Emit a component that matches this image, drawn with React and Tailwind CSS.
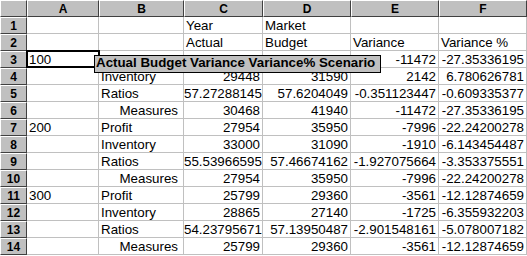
import React from "react";

const widths = ["w-[72px]", "w-[85px]", "w-[79px]", "w-[88px]", "w-[88px]", "w-[88px]"];
const letters = ["A", "B", "C", "D", "E", "F"];

const rows = [
  ["", "", "Year", "Market", "", ""],
  ["", "", "Actual", "Budget", "Variance", "Variance %"],
  ["100", "", "", "", "-11472", "-27.35336195"],
  ["", "Inventory", "29448", "31590", "2142", "6.780626781"],
  ["", "Ratios", "57.27288145", "57.6204049", "-0.351123447", "-0.609335377"],
  ["", "Measures", "30468", "41940", "-11472", "-27.35336195"],
  ["200", "Profit", "27954", "35950", "-7996", "-22.24200278"],
  ["", "Inventory", "33000", "31090", "-1910", "-6.143454487"],
  ["", "Ratios", "55.53966595", "57.46674162", "-1.927075664", "-3.353375551"],
  ["", "Measures", "27954", "35950", "-7996", "-22.24200278"],
  ["300", "Profit", "25799", "29360", "-3561", "-12.12874659"],
  ["", "Inventory", "28865", "27140", "-1725", "-6.355932203"],
  ["", "Ratios", "54.23795671", "57.13950487", "-2.901548161", "-5.078007182"],
  ["", "Measures", "25799", "29360", "-3561", "-12.12874659"],
];

const isNum = (s) => /^-?\d+(\.\d+)?$/.test(s) && s !== "100" && s !== "200" && s !== "300";

function Cell({ value, w }) {
  const right = isNum(value);
  const measures = value === "Measures";
  return (
    <div
      className={`${w} flex-none h-[17px] box-border border-r border-b border-[#c0c0c0] overflow-hidden whitespace-nowrap pt-[1px] leading-[15px] ${
        right ? "text-right pr-[2px]" : measures ? "text-right pr-[5px]" : "text-left pl-[2px]"
      }`}
    >
      {value}
    </div>
  );
}

export default function App() {
  return (
    <div className="relative w-[527px] h-[256px] overflow-hidden bg-white text-black font-['Liberation_Sans',Arial,sans-serif] text-[13.33px]">
      <div className="flex h-[17px]">
        <div className="w-[27px] flex-none h-[17px] box-border bg-[#c0c0c0] border-t border-l border-t-white border-l-white border-r border-b border-r-[#404040] border-b-[#404040]" />
        {letters.map((l, i) => (
          <div
            key={l}
            className={`${widths[i]} flex-none h-[17px] box-border bg-[#c0c0c0] border-t border-l border-t-white border-l-white border-r border-b border-r-[#404040] border-b-[#404040] text-center font-bold text-[12px] leading-[17px]`}
          >
            {l}
          </div>
        ))}
      </div>
      {rows.map((r, ri) => (
        <div key={ri} className="flex h-[17px]">
          <div className="w-[27px] flex-none h-[17px] box-border bg-[#c0c0c0] border-t border-l border-t-white border-l-white border-r border-b border-r-[#404040] border-b-[#404040] text-center font-bold text-[12px] leading-[16px]">
            {ri + 1}
          </div>
          {r.map((v, ci) => (
            <Cell key={ci} value={v} w={widths[ci]} />
          ))}
        </div>
      ))}
      <div className="absolute left-[26px] top-[50px] w-[74px] h-[18px] box-border border-2 border-black" />
      <div className="absolute left-[94px] top-[55px] w-[287px] h-[18px] box-border bg-[#c0c0c0] border border-black font-bold leading-[13px] pl-[1px] whitespace-nowrap">
        Actual Budget Variance Variance% Scenario
      </div>
    </div>
  );
}
